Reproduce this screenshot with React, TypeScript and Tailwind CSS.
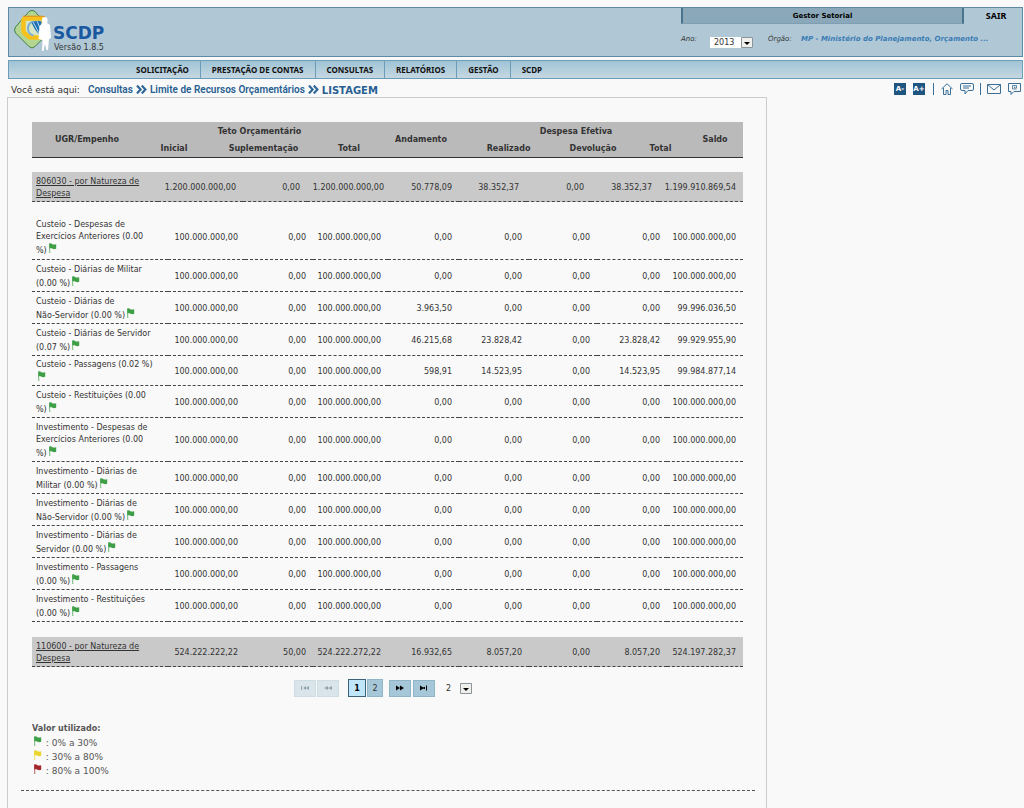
import type { ReactNode } from 'react';
import clsx from 'clsx';

const menu = ['SOLICITAÇÃO', 'PRESTAÇÃO DE CONTAS', 'CONSULTAS', 'RELATÓRIOS', 'GESTÃO', 'SCDP'];

const hundred = '100.000.000,00';
const unused = [hundred, '0,00', hundred, '0,00', '0,00', '0,00', '0,00', hundred];

const details = [
    { name: ['Custeio - Despesas de', 'Exercícios Anteriores (0.00', '%)'], values: unused },
    { name: ['Custeio - Diárias de Militar', '(0.00 %)'], values: unused },
    { name: ['Custeio - Diárias de', 'Não-Servidor (0.00 %)'], values: [hundred, '0,00', hundred, '3.963,50', '0,00', '0,00', '0,00', '99.996.036,50'] },
    { name: ['Custeio - Diárias de Servidor', '(0.07 %)'], values: [hundred, '0,00', hundred, '46.215,68', '23.828,42', '0,00', '23.828,42', '99.929.955,90'] },
    { name: ['Custeio - Passagens (0.02 %)', ''], values: [hundred, '0,00', hundred, '598,91', '14.523,95', '0,00', '14.523,95', '99.984.877,14'] },
    { name: ['Custeio - Restituições (0.00', '%)'], values: unused },
    { name: ['Investimento - Despesas de', 'Exercícios Anteriores (0.00', '%)'], values: unused },
    { name: ['Investimento - Diárias de', 'Militar (0.00 %)'], values: unused },
    { name: ['Investimento - Diárias de', 'Não-Servidor (0.00 %)'], values: unused },
    { name: ['Investimento - Diárias de', 'Servidor (0.00 %)'], values: unused },
    { name: ['Investimento - Passagens', '(0.00 %)'], values: unused },
    { name: ['Investimento - Restituições', '(0.00 %)'], values: unused },
];

const headerCols = [110, 64, 115, 56, 88, 87, 82, 53, 56];
const groupCols = [126, 85, 64, 84, 68, 67, 65, 68, 84];
const detailCols = [136, 77, 68, 75, 71, 70, 68, 70, 76];

function rowHeight(name: string[]) {
    if (name.length === 3) return 'h-11';
    // only the flag stands on the second line
    return name[1] === '' ? 'h-[30px]' : 'h-8';
}

function Columns({ widths }: { widths: number[] }) {
    return (
        <colgroup>
            {widths.map((w, i) => (
                <col key={i} style={{ width: w }} />
            ))}
        </colgroup>
    );
}

function Flag({ color = '#3f9f47' }: { color?: string }) {
    return (
        <svg className="inline-block w-[9px] h-[10px] mx-px align-baseline" viewBox="0 0 9 10" aria-hidden="true">
            <path d="M1 1.2h.9L2.3 10h-1z" fill={color} opacity=".75" />
            <path d="M1.2.6c1.4-.6 2.2.1 3.2.6.8.4 2 .4 3.8.1v4.5c-1.5.5-2.6.4-3.7-.1-1-.4-1.8-.6-3-.2z" fill={color} />
        </svg>
    );
}

function Arrows() {
    return (
        <svg className="w-[11px] h-[9px] mx-[3px]" viewBox="0 0 11 9" fill="none" stroke="#2e6699" strokeWidth="2.2" aria-hidden="true">
            <path d="M1 .6 4.6 4.5 1 8.4M5.8.6 9.4 4.5 5.8 8.4" />
        </svg>
    );
}

function Logo() {
    return (
        <svg className="w-[37px] h-[41px]" viewBox="0 0 37 41" aria-hidden="true">
            <path d="M15 1.500q3-2.500 6 0L34.500 17q2 3 0 6L21 36.500q-3 3-6 0L1.500 23q-2-3 0-6z" fill="#b5d690" stroke="#3f7f4a" strokeWidth="1" />
            <path d="M11.500 8.500H28q2 0 2 2v15q0 2-2 2H17q-2 0-3-1.500L10.500 23q-1-1-1-2.500v-10q0-2 2-2z" fill="#d8e6c8" stroke="#f7c11c" strokeWidth="4.500" strokeLinejoin="round" />
            <path d="M9 6.200h19.500q3 0 3.500 3" fill="none" stroke="#e08a1e" strokeWidth="1" />
            <path d="M19.500 11.500q-5.500 1.500-5.500 7t5.500 7" fill="none" stroke="#7db0d0" strokeWidth="2" />
            <path d="M17.500 12.500q5-3 10-1l-1 14q-6-5-9-13z" fill="#1f72b5" />
            <path d="m19 12 7 13M23 11l3 7" stroke="#fff" strokeWidth=".7" />
            <path d="M30.500 7c2.500 0 3.500 2 3 4.500l-.5 1.500 3 2 1 13-2 1-1 11h-1.500L31 34l-1.500 7H28l.5-11-4-1 1-13 3-3c-1-3-.5-6 2-6z" fill="#fff" />
        </svg>
    );
}

function SelectArrow() {
    return (
        <svg className="absolute right-0 top-0 w-[12px] h-[11px] pointer-events-none" viewBox="0 0 12 11" aria-hidden="true">
            <path d="M.5.5h11v10H.5z" fill="#efefec" stroke="#8a949a" />
            <path d="M3 5h6L6 8z" fill="#000" />
        </svg>
    );
}

function GroupRow({ code, values, widths }: { code: string; values: string[]; widths: number[] }) {
    return (
        <table className="w-full table-fixed text-[8px] leading-3">
            <Columns widths={widths} />
            <tbody>
                <tr className="h-[30px] bg-[#c9c9c9] border-b border-dashed border-[#444]">
                    <th scope="row" className="pl-1 pt-[3px] text-left font-normal">
                        <a href="#" className="underline">{code} - por Natureza de<br />Despesa</a>
                    </th>
                    {values.map((v, i) => (
                        <td key={i} className="pt-[3px] pr-[7px] text-right">{v}</td>
                    ))}
                </tr>
            </tbody>
        </table>
    );
}

function PagerButton({ label, disabled, children }: { label: string; disabled?: boolean; children: ReactNode }) {
    return (
        <button
            type="button"
            aria-label={label}
            disabled={disabled}
            className={clsx(
                'w-[22px] h-[17px] flex items-center justify-center border',
                disabled ? 'bg-[#d9e4eb] border-[#cedce4] text-[#93a5b0]' : 'bg-[#a5c7d7] border-[#8fb5c8] text-black',
            )}
        >
            <svg className="w-[10px] h-[6px]" viewBox="0 0 10 6" fill="currentColor" aria-hidden="true">{children}</svg>
        </button>
    );
}

export default function App() {
    return (
        <div className="min-h-screen flex flex-col bg-[#f9f9f9] font-['DejaVu_Sans',Verdana,sans-serif] text-[#333]">
            <header className="mt-[7px] ml-2 mr-px h-[50px] flex justify-between bg-[#b0c8d6] border border-[#5f8aa5]">
                <div className="flex pl-[5px] pt-[2px]">
                    <Logo />
                    <div className="pt-[13px] pl-[2px]">
                        <div className="text-[17px] leading-5 font-bold text-[#1a58a0]">SCDP</div>
                        <div className="text-[8px] leading-[10px] pl-px">Versão 1.8.5</div>
                    </div>
                </div>

                <div className="w-[341px]">
                    <div className="flex h-4 text-black">
                        <div className="flex-1 border-x-2 border-b border-x-[#4a738e] border-b-[#7e9fb3] bg-[#8aa8b9] text-center text-[7px] leading-4 font-bold">
                            Gestor Setorial
                        </div>
                        <a href="#" className="w-[58px] pl-[6px] text-center font-['Noto_Sans',sans-serif] text-[9px] leading-4 font-bold">SAIR</a>
                    </div>
                    <div className="flex pt-[9px] text-[7px] leading-3 italic whitespace-nowrap">
                        <label htmlFor="ano" className="w-[29px]">Ano:</label>
                        <span className="relative mt-1 w-[43px] h-[11px]">
                            <select id="ano" defaultValue="2013" className="block w-full h-[11px] appearance-none bg-white pl-1 text-[8px] leading-[11px] not-italic text-[#333]">
                                <option>2013</option>
                                <option>2012</option>
                            </select>
                            <SelectArrow />
                        </span>
                        <span className="ml-[15px] w-[33px]">Órgão:</span>
                        <span className="font-bold text-[#3b7cb4]">MP - Ministério do Planejamento, Orçamento ...</span>
                    </div>
                </div>
            </header>

            <nav className="mt-[3px] ml-2 mr-px h-[19px] pl-[116px] flex border border-[#6d9db8] bg-linear-to-b from-[#9fc4d6] to-[#c5d7e1] font-['Noto_Sans',sans-serif] text-[8px] leading-[17px] font-bold text-[#111]">
                {menu.map((item) => (
                    <a key={item} href="#" className="px-[11px] border-r border-[#6d9db8] last:border-r-0">{item}</a>
                ))}
            </nav>

            <div className="flex justify-between items-start h-[18px] pt-1 pl-[11px] pr-[3px]">
                <div className="flex items-center h-[13px] font-['Roboto',sans-serif] text-[10px] font-semibold text-[#285f92]">
                    <span className="mr-2 pt-[2px] font-['DejaVu_Sans',Verdana,sans-serif] text-[9px] font-normal text-[#333]">Você está aqui:</span>
                    <a href="#">Consultas</a>
                    <Arrows />
                    <a href="#">Limite de Recursos Orçamentários</a>
                    <Arrows />
                    <span className="pt-px font-['DejaVu_Sans',Verdana,sans-serif] font-bold">LISTAGEM</span>
                </div>

                <div className="flex items-center h-3 text-[#3b6f97]">
                    <button type="button" className="w-3 h-3 mr-[7px] bg-[#1f5581] text-white text-[7px] leading-3 font-bold">A-</button>
                    <button type="button" className="w-3 h-3 mr-2 bg-[#1f5581] text-white text-[7px] leading-3 font-bold">A+</button>
                    <span className="w-px h-3 mr-[7px] bg-[#3b6f97]" />
                    <a href="#" aria-label="Início" className="mr-[7px]">
                        <svg className="w-3 h-3" viewBox="0 0 12 12" fill="none" stroke="currentColor">
                            <path d="M.5 6 6 .8 11.5 6M2.5 5v6.5H5v-4h2v4h2.5V5" />
                        </svg>
                    </a>
                    <a href="#" aria-label="Mensagens" className="mr-[6px]">
                        <svg className="w-[14px] h-3" viewBox="0 0 14 12" fill="none" stroke="currentColor">
                            <path d="M2 .5h10q1.5 0 1.5 1.5v4q0 1.5-1.500 1.500H8L5 11V7.500H2Q.5 7.500.5 6V2Q.5.5 2 .5zM3 3h8M3 5h6" />
                        </svg>
                    </a>
                    <span className="w-px h-3 mr-[6px] bg-[#3b6f97]" />
                    <a href="#" aria-label="E-mail" className="mr-[6px]">
                        <svg className="w-[14px] h-3" viewBox="0 0 14 12" fill="none" stroke="currentColor">
                            <path d="M.5 1.500h13v9H.5zM.5 1.500 7 7l6.500-5.500" />
                        </svg>
                    </a>
                    <a href="#" aria-label="Contato">
                        <svg className="w-[14px] h-3" viewBox="0 0 14 12" fill="none" stroke="currentColor">
                            <path d="M1.500.5h12v8H7L4 11.500v-3H1.500z" />
                            <path d="M9.500 6h-4V2.500h4v2.500h-2V3.500" strokeWidth=".8" />
                        </svg>
                    </a>
                </div>
            </div>

            <main className="flex-1 ml-[7px] mr-[257px] border border-b-0 border-[#ccc] pt-6 pl-[13px] pr-[11px]">
                <div className="pl-[11px] pr-3">
                    <table className="w-full table-fixed bg-[#bababa] border-b border-[#333] text-[8px] leading-3">
                        <Columns widths={headerCols} />
                        <thead>
                            <tr className="h-[18px]">
                                <th rowSpan={2} className="pt-[2px]">UGR/Empenho</th>
                                <th colSpan={3} className="pt-px">Teto Orçamentário</th>
                                <th rowSpan={2} className="pt-[2px]">Andamento</th>
                                <th colSpan={3} className="pt-px">Despesa Efetiva</th>
                                <th rowSpan={2} className="pt-[2px]">Saldo</th>
                            </tr>
                            <tr className="h-[17px]">
                                <th className="pt-[2px]">Inicial</th>
                                <th className="pt-[2px]">Suplementação</th>
                                <th className="pt-[2px]">Total</th>
                                <th className="pt-[2px]">Realizado</th>
                                <th className="pt-[2px]">Devolução</th>
                                <th className="pt-[2px]">Total</th>
                            </tr>
                        </thead>
                    </table>

                    <div className="mt-[14px]">
                        <GroupRow
                            code="806030"
                            widths={groupCols}
                            values={['1.200.000.000,00', '0,00', '1.200.000.000,00', '50.778,09', '38.352,37', '0,00', '38.352,37', '1.199.910.869,54']}
                        />
                    </div>

                    <table className="mt-[13px] w-full table-fixed text-[8px] leading-3">
                        <Columns widths={detailCols} />
                        <tbody>
                            {details.map((row) => (
                                <tr key={row.name.join(' ')} className={clsx('border-b border-dashed border-[#444]', rowHeight(row.name))}>
                                    <th scope="row" className="pl-1 pt-[3px] text-left font-normal whitespace-nowrap">
                                        {row.name.map((line, i) => (
                                            <span key={i} className="block">
                                                {line}
                                                {i === row.name.length - 1 && <Flag />}
                                            </span>
                                        ))}
                                    </th>
                                    {row.values.map((v, i) => (
                                        <td key={i} className="pt-[3px] pr-[7px] text-right">{v}</td>
                                    ))}
                                </tr>
                            ))}
                        </tbody>
                    </table>

                    <div className="mt-[15px]">
                        <GroupRow
                            code="110600"
                            widths={detailCols}
                            values={['524.222.222,22', '50,00', '524.222.272,22', '16.932,65', '8.057,20', '0,00', '8.057,20', '524.197.282,37']}
                        />
                    </div>

                    {/* Pagination */}
                    <div className="mt-3 pl-[262px] h-[18px] flex items-center text-[8px]">
                        <div className="flex gap-px">
                            <PagerButton label="Primeira" disabled>
                                <path d="M1 1h1v4H1zM6 1v4L3 3zM9 1v4L6 3z" />
                            </PagerButton>
                            <PagerButton label="Anterior" disabled>
                                <path d="M5 1v4L1 3zM9 1v4L5 3z" />
                            </PagerButton>
                        </div>
                        <div className="flex gap-px mx-[6px] pl-[3px]">
                            <button type="button" className="w-[18px] h-[18px] border border-[#3c6278] bg-[#bfe6fb] pt-px font-bold text-black">1</button>
                            <button type="button" className="w-4 h-[18px] border border-[#8fb5c8] bg-[#a5c7d7] pt-px">2</button>
                        </div>
                        <div className="flex gap-[2px]">
                            <PagerButton label="Próxima">
                                <path d="M1 .5v5L5 3zM5 .5v5L9 3z" />
                            </PagerButton>
                            <PagerButton label="Última">
                                <path d="M1 .5v5L5 3zM4 2h2v2H4zM7 .5h1v5H7z" />
                            </PagerButton>
                        </div>
                        <span className="relative ml-[7px] w-[30px] h-[11px]">
                            <select aria-label="Página" defaultValue="2" className="block w-full h-[11px] appearance-none pl-1 leading-[11px]">
                                <option>1</option>
                                <option>2</option>
                            </select>
                            <SelectArrow />
                        </span>
                    </div>

                    <div className="mt-[25px] text-[9px] leading-[14px] text-[#555]">
                        <p className="text-[8px] font-bold">Valor utilizado:</p>
                        <ul>
                            <li><Flag color="#3f9f47" /> : 0% a 30%</li>
                            <li><Flag color="#ecd52c" /> : 30% a 80%</li>
                            <li><Flag color="#a3262a" /> : 80% a 100%</li>
                        </ul>
                    </div>
                </div>
                <div className="mt-3 border-b border-dashed border-[#555]" />
            </main>
        </div>
    );
}
